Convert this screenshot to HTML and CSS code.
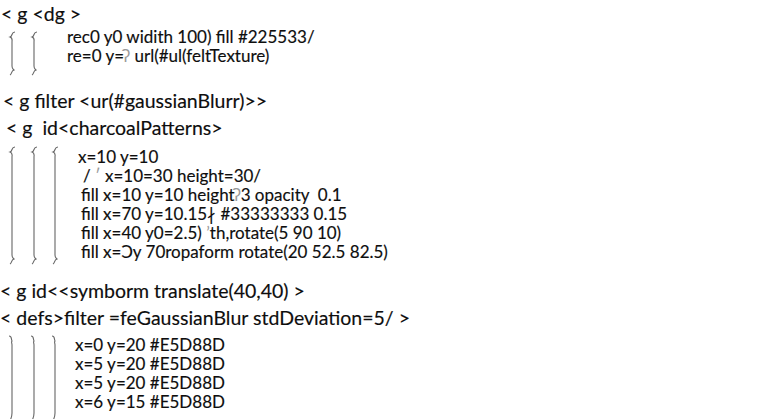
FILE: index.html
```html
<!DOCTYPE html>
<html>
<head>
<meta charset="utf-8">
<link rel="stylesheet" href="styles.css">
</head>
<body>
<div class="page">
  <div class="head h1">&lt; g &lt;dg &gt;</div>
  <div class="section s1">
    <svg class="brackets" width="60" height="48" viewBox="0 0 60 48">
      <path d="M15 4 C11 4 13 8 10 9 C13 10 12 12 12 14 L12 38 C12 41 13 41 14 42 C11 43 12 46 10 47" />
      <path d="M37 4 C33 4 35 8 32 9 C35 10 34 12 34 14 L34 38 C34 41 35 41 36 42 C33 43 34 46 32 47" />
    </svg>
    <div class="lines">
      <div class="ln">rec0 y0 widith 100) fill #225533/</div>
      <div class="ln">re=0 y=<span class="faint">ʔ</span> url(#ul(feltTexture)</div>
    </div>
  </div>
  <div class="head h2">&lt; g filter &lt;ur(#gaussianBlurr)&gt;&gt;</div>
  <div class="head h3">&lt; g  id&lt;charcoalPatterns&gt;</div>
  <div class="section s2">
    <svg class="brackets" width="60" height="124" viewBox="0 0 60 124">
      <path d="M15 4 C11 4 13 8 10 9 C13 10 12 12 12 14 L12 112 C12 115 13 115 14 116 C11 117 12 120 10 121" />
      <path d="M37 4 C33 4 35 8 32 9 C35 10 34 12 34 14 L34 112 C34 115 35 115 36 116 C33 117 34 120 32 121" />
      <path d="M58 4 C54 4 56 8 53 9 C56 10 55 12 55 14 L55 112 C55 115 56 115 57 116 C54 117 55 120 53 121" />
    </svg>
    <div class="lines">
      <div class="ln i0">x=10 y=10</div>
      <div class="ln i1">/ <span class="faint">′</span> x=10=30 height=30/</div>
      <div class="ln i2">fill x=10 y=10 height<span class="faint">ʔ</span>3 opacity  0.1</div>
      <div class="ln i2">fill x=70 y=10.15∤ #33333333 0.15</div>
      <div class="ln i2">fill x=40 y0=2.5) <span class="faint">ʼ</span>th,rotate(5 90 10)</div>
      <div class="ln i2">fill x=Ͻy 70ropaform rotate(20 52.5 82.5)</div>
    </div>
  </div>
  <div class="head h4">&lt; g id&lt;&lt;symborm translate(40,40) &gt;</div>
  <div class="head h5">&lt; defs&gt;filter =feGaussianBlur stdDeviation=5/ &gt;</div>
  <div class="section s3">
    <svg class="brackets" width="60" height="90" viewBox="0 0 60 90">
      <path d="M9 3 C12 3 11 6 12 8 C11 9 12 10 12 12 L12 80 C12 84 11 85 10 88" />
      <path d="M31 3 C34 3 33 6 34 8 C33 9 34 10 34 12 L34 80 C34 84 33 85 32 88" />
      <path d="M52 3 C55 3 54 6 55 8 C54 9 55 10 55 12 L55 80 C55 84 54 85 53 88" />
    </svg>
    <div class="lines">
      <div class="ln">x=0 y=20 #E5D88D</div>
      <div class="ln">x=5 y=20 #E5D88D</div>
      <div class="ln">x=5 y=20 #E5D88D</div>
      <div class="ln">x=6 y=15 #E5D88D</div>
    </div>
  </div>
</div>
</body>
</html>
```
FILE: styles.css
```css
html, body {
  margin: 0;
  padding: 0;
  background: #ffffff;
}
.page {
  width: 768px;
  height: 419px;
  overflow: hidden;
  font-family: Lato, "Noto Sans", sans-serif;
  color: #0e0e0e;
  -webkit-text-stroke: 0.15px #0e0e0e;
}
.head {
  font-size: 19.5px;
  line-height: 27px;
  height: 27px;
  white-space: pre;
}
.h1 { padding-left: 1px; }
.h2 { padding-left: 3px; margin-top: 11px; }
.h3 { padding-left: 6px; }
.h4 { padding-left: 0; margin-top: 10px; }
.h5 { padding-left: 0; }
.section {
  display: flex;
  align-items: flex-start;
}
.brackets {
  flex: none;
  fill: none;
  stroke: #666666;
  stroke-width: 1.1;
}
.lines {
  font-size: 17px;
  line-height: 19px;
}
.ln {
  height: 19px;
  white-space: pre;
}
.s1 .brackets { margin-top: 1px; }
.s1 .lines { padding-left: 7px; }
.s2 { margin-top: 6px; }
.s2 .brackets { margin-top: -4px; }
.s2 .lines { padding-left: 18px; }
.i1 { padding-left: 5px; }
.i2 { padding-left: 3px; }
.s3 { margin-top: 4px; }
.s3 .brackets { margin-top: -2px; }
.s3 .lines { padding-left: 15px; }
.faint { color: #9a9a9a; -webkit-text-stroke: 0; }
```
